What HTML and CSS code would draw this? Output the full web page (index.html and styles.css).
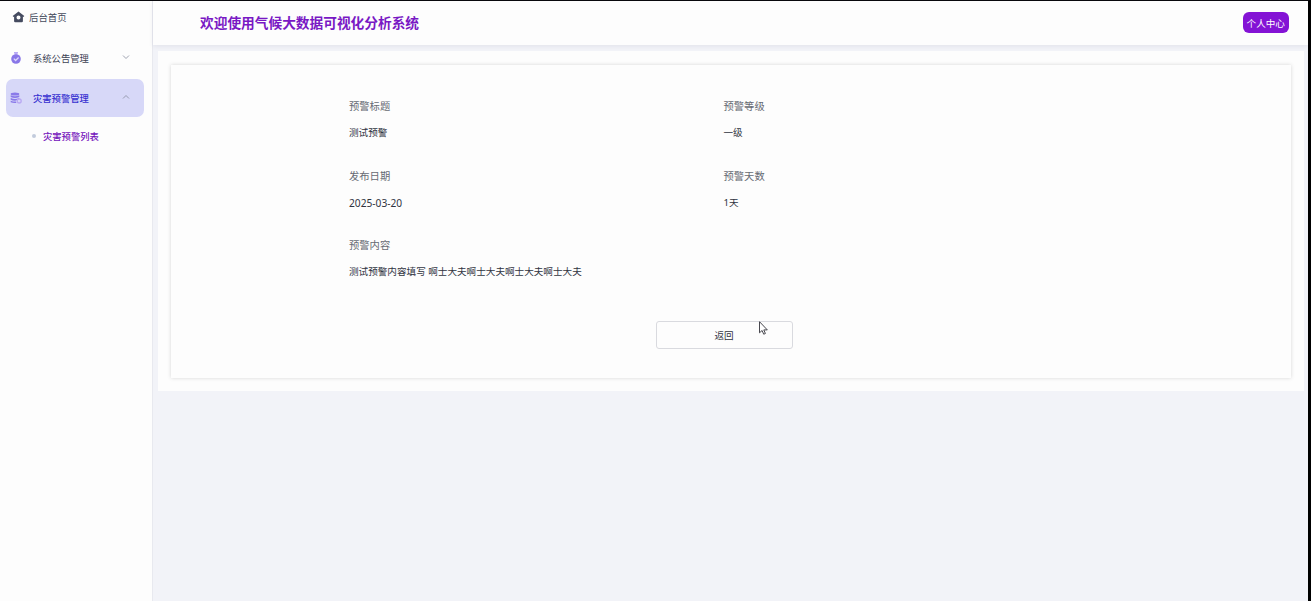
FILE: index.html
```html
<!DOCTYPE html>
<html lang="zh-CN">
<head>
    <meta charset="UTF-8">
    <meta name="viewport" content="width=device-width, initial-scale=1.0">
    <title>气候大数据可视化分析系统</title>
    <link rel="stylesheet" href="styles.css">
</head>
<body>
    <div class="layout">
        <aside class="sidebar">
            <a class="home">
                <svg class="home-icon" viewBox="0 0 12 12">
                    <path fill="#454b60" fill-rule="evenodd" d="M6 .4 11.800 5l-.7 1-.7-.4v4.600a1.100 1.100 0 0 1-1.100 1.100H2.700a1.100 1.100 0 0 1-1.100-1.100V5.600L.9 6 .2 5zM6 4.500a2 2 0 1 0 0 4 2 2 0 0 0 0-4z"/>
                </svg>
                <span>后台首页</span>
            </a>
            <nav class="menu">
                <div class="menu-item">
                    <svg class="menu-icon" viewBox="0 0 12 12">
                        <path fill="#b9aaf4" d="M4 0h4v1.500H7.300v1.300H4.700V1.500H4z"/>
                        <circle cx="6" cy="7" r="4.800" fill="#8977e8"/>
                        <path d="m3.800 6.600 1.800 1.900 3-3" fill="none" stroke="#dcd5fc" stroke-width="1.300"/>
                    </svg>
                    <span class="menu-text">系统公告管理</span>
                    <svg class="arrow" viewBox="0 0 8 8"><path d="m1 2.500 3 3 3-3"/></svg>
                </div>
                <div class="menu-item open">
                    <svg class="menu-icon" viewBox="0 0 12 12">
                        <g fill="#8a7ae9">
                            <ellipse cx="5" cy="2" rx="4.300" ry="1.500"/>
                            <path d="M.7 3.200q4.300 2 8.600 0v1.700q-4.300 2-8.600 0zM.7 5.900q4.300 2 8.600 0V7q-2.500.4-3 1.600-3.500.3-5.600-.8zM.7 8.700q2.500 1 5.200.9l.5 1.400Q3 11.400.7 10.300z"/>
                        </g>
                        <circle cx="9.200" cy="9" r="2" fill="#d7d6f8" stroke="#b9a8f2" stroke-width="1.300"/>
                    </svg>
                    <span class="menu-text">灾害预警管理</span>
                    <svg class="arrow" viewBox="0 0 8 8"><path d="m1 5.500 3-3 3 3"/></svg>
                </div>
                <a class="submenu-item">灾害预警列表</a>
            </nav>
        </aside>
        <div class="main">
            <header class="header">
                <h1>欢迎使用气候大数据可视化分析系统</h1>
                <button class="user-btn">个人中心</button>
            </header>
            <div class="content">
                <div class="card">
                    <div class="details">
                        <div class="field">
                            <div class="label">预警标题</div>
                            <div class="value">测试预警</div>
                        </div>
                        <div class="field">
                            <div class="label">预警等级</div>
                            <div class="value">一级</div>
                        </div>
                        <div class="field">
                            <div class="label">发布日期</div>
                            <div class="value date">2025-03-20</div>
                        </div>
                        <div class="field">
                            <div class="label">预警天数</div>
                            <div class="value">1天</div>
                        </div>
                        <div class="field wide">
                            <div class="label">预警内容</div>
                            <div class="value">测试预警内容填写 啊士大夫啊士大夫啊士大夫啊士大夫</div>
                        </div>
                    </div>
                    <button class="back-btn">返回</button>
                </div>
            </div>
        </div>
    </div>
    <svg class="cursor" viewBox="0 0 9 14">
        <path d="M.5.700v11.100l2.600-2.300 1.600 3.700 1.700-.7-1.600-3.600h3.500z" fill="#fff" stroke="#33333b" stroke-width=".9"/>
    </svg>
</body>
</html>
```
FILE: styles.css
```css
* {
    margin: 0;
    padding: 0;
    box-sizing: border-box;
}

body {
    height: 100vh;
    overflow: hidden;
    border-top: 1px solid #08080c;
    border-right: 3px solid #000;
    background: #f2f3f8;
    font-family: "Noto Sans", "Noto Sans CJK SC", sans-serif;
    font-size: 9.6px;
    color: #30343f;
}

button {
    font-family: inherit;
    cursor: pointer;
}

.layout {
    display: flex;
    height: 100%;
}

.sidebar {
    width: 153px;
    flex-shrink: 0;
    background: #fdfdfd;
    border-right: 1px solid #e8e9ef;
}

.home {
    display: flex;
    align-items: center;
    height: 32px;
    padding-left: 12px;
    gap: 4px;
    font-size: 9.4px;
    color: #454b5c;
}

.home-icon {
    width: 13px;
    height: 12px;
}

.menu {
    padding: 5.500px 8px 0 6px;
}

.menu-item {
    display: flex;
    align-items: center;
    height: 38px;
    margin-bottom: 2px;
    padding: 0 14px 0 4px;
    border-radius: 7px;
    font-size: 9.3px;
    color: #3c4254;
}

.menu-item.open {
    background: #d7d8f8;
    color: #352fd0;
    font-weight: 500;
}

.menu-icon {
    width: 12px;
    height: 12px;
}

.menu-text {
    flex: 1;
    padding-left: 11px;
}

.arrow {
    width: 8px;
    height: 8px;
    margin-top: -2px;
    fill: none;
    stroke: #858a9c;
    stroke-width: .8;
}

.submenu-item {
    display: flex;
    align-items: center;
    height: 35px;
    padding-left: 26px;
    gap: 7px;
    font-size: 9.3px;
    font-weight: 500;
    color: #7412bb;
}

.submenu-item::before {
    content: "";
    width: 4px;
    height: 4px;
    border-radius: 50%;
    background: #c2cbdc;
}

.main {
    flex: 1;
}

.header {
    display: flex;
    align-items: center;
    justify-content: space-between;
    height: 44px;
    padding: 0 19px 1px 47px;
    background: #fdfdfd;
    box-shadow: 0 1px 5px rgba(30, 30, 60, .08);
}

h1 {
    margin-top: -1px;
    font-size: 13.7px;
    font-weight: bold;
    color: #7918c4;
}

.user-btn {
    width: 46.500px;
    height: 21px;
    border: none;
    border-radius: 6px;
    background: #8413d5;
    color: #fff;
    font-size: 9.6px;
}

.content {
    margin: 6px 4px 0 5px;
    padding: 14px 13px 13px;
    background: #fdfdfd;
}

.card {
    height: 313px;
    padding: 33px 0 0 178px;
    box-shadow: 0 0 4px rgba(0, 0, 0, .16);
}

.details {
    display: grid;
    grid-template-columns: 374.500px 374px;
    grid-auto-rows: 69.700px;
}

.field.wide {
    grid-column: span 2;
}

.label {
    height: 27px;
    line-height: 16px;
    font-size: 10.3px;
    color: #666a73;
}

.value {
    line-height: 16px;
}

.value.date {
    font-size: 10.2px;
}

.back-btn {
    display: block;
    width: 137px;
    height: 28px;
    margin: 14px 0 0 306.500px;
    border: 1px solid #d9dadf;
    border-radius: 3px;
    background: #fdfdfd;
    color: #30343f;
    font-size: 9.6px;
}

/* mouse pointer over the page */
.cursor {
    position: absolute;
    left: 759px;
    top: 321px;
    width: 9px;
    height: 14px;
}
```
